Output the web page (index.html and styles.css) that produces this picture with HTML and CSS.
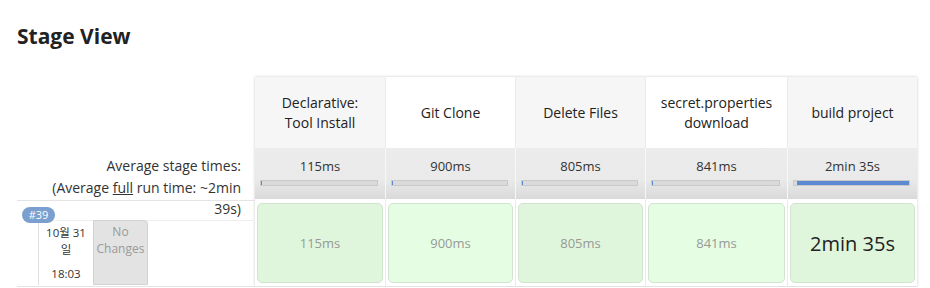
FILE: index.html
```html
<!DOCTYPE html>
<html lang="ko">
<head>
    <meta charset="UTF-8">
    <title>Stage View</title>
    <link rel="stylesheet" href="styles.css">
</head>
<body>
    <h1 class="title">Stage View</h1>

    <div class="stage-view">
        <div class="labels">
            <div class="labels-head"></div>
            <div class="avg-label">
                Average stage times:<br>
                (Average <u>full</u> run time: ~2min<br>
                39s)
            </div>
            <div class="build-label">
                <span class="badge">#39</span>
                <div class="build-info">
                    <div class="build-date">10월 31<br>일<span class="build-time">18:03</span></div>
                    <div class="changes">No<br>Changes</div>
                </div>
            </div>
        </div>

        <div class="stages">
            <div class="row head">
                <div class="col c1 odd">Declarative:<br>Tool Install</div>
                <div class="col c2">Git Clone</div>
                <div class="col c3 odd">Delete Files</div>
                <div class="col c4">secret.properties<br>download</div>
                <div class="col c5 odd">build project</div>
            </div>
            <div class="row avg">
                <div class="col c1">115ms<div class="bar"><div class="fill" style="margin-left:0;width:1px"></div></div></div>
                <div class="col c2">900ms<div class="bar"><div class="fill" style="margin-left:0;width:1px"></div></div></div>
                <div class="col c3">805ms<div class="bar"><div class="fill" style="margin-left:0;width:1px"></div></div></div>
                <div class="col c4">841ms<div class="bar"><div class="fill" style="margin-left:0;width:1px"></div></div></div>
                <div class="col c5">2min 35s<div class="bar"><div class="fill" style="margin-left:3px;width:112px"></div></div></div>
            </div>
            <div class="row build">
                <div class="col c1"><div class="cell odd">115ms</div></div>
                <div class="col c2"><div class="cell">900ms</div></div>
                <div class="col c3"><div class="cell odd">805ms</div></div>
                <div class="col c4"><div class="cell">841ms</div></div>
                <div class="col c5"><div class="cell odd long">2min 35s</div></div>
            </div>
        </div>
    </div>
</body>
</html>
```

FILE: styles.css
```css
body {
    margin: 0;
    font-family: "Open Sans", "Noto Sans CJK KR", sans-serif;
    color: #333;
}

.title {
    margin: 0;
    padding: 24px 0 0 17px;
    font-size: 21px;
    line-height: 24px;
    font-weight: bold;
    color: #222;
}

.stage-view {
    display: flex;
    margin: 29px 0 0 17px;
}

/* left column */
.labels {
    width: 238px;
}

.labels-head {
    height: 71px;
}

.avg-label {
    height: 52px;
    box-sizing: border-box;
    padding: 7px 14px 0 0;
    text-align: right;
    white-space: nowrap;
    font-size: 14px;
    line-height: 21.5px;
    color: #333;
}

.build-label {
    position: relative;
    height: 87px;
    box-sizing: border-box;
    border-top: 1px solid #e4e4e4;
    border-bottom: 1px solid #e4e4e4;
}

.badge {
    position: absolute;
    left: 5px;
    top: 6px;
    width: 33px;
    height: 16px;
    border-radius: 8px;
    background-color: #7ba0cf;
    color: #fff;
    font-size: 11px;
    line-height: 16px;
    text-align: center;
}

.build-info {
    display: flex;
    margin: 19px 0 0 21px;
    height: 64px;
    border-top: 1px solid #eee;
}

.build-date {
    width: 55px;
    box-sizing: border-box;
    border-left: 1px solid #e0e0e0;
    padding-top: 3px;
    text-align: center;
    font-size: 11.5px;
    line-height: 17px;
}

.build-time {
    display: block;
    margin-top: 7px;
}

.changes {
    width: 55px;
    box-sizing: border-box;
    margin-top: -1px;
    border: 1px solid #d2d2d2;
    border-top-right-radius: 4px;
    background-color: #e3e3e3;
    color: #9a9a9a;
    text-align: center;
    font-size: 12px;
    line-height: 17px;
    padding-top: 2px;
}

/* stage table */
.stages {
    box-shadow: 0 0 3px rgba(0, 0, 0, 0.2);
}

.row {
    display: flex;
}

.col {
    box-sizing: border-box;
    width: 130px;
}

.col.c4 {
    width: 142px;
}

.col + .col {
    border-left: 1px solid #ebebeb;
}

.head .col {
    height: 71px;
    display: flex;
    align-items: center;
    justify-content: center;
    text-align: center;
    font-size: 14px;
    line-height: 20px;
    color: #222;
    background-color: #fff;
}

.head .col.odd {
    background-color: #f6f6f6;
}

.avg .col {
    height: 51px;
    padding-top: 8px;
    text-align: center;
    font-size: 13px;
    line-height: 20px;
    background: linear-gradient(to bottom, #ececec 0, #eaeaea 62%, #d9d9d9 100%);
}

.avg .col + .col {
    border-left-color: #f7f7f7;
}

.bar {
    height: 6px;
    margin: 4px 7px 0 5px;
    box-sizing: border-box;
    border: 1px solid #c9c9c9;
    background-color: #dadada;
}

.fill {
    height: 4px;
    background-color: #5b8ad3;
}

.build .col {
    height: 88px;
    padding: 4px 2px;
    border-bottom: 1px solid #e2e2e2;
}

.cell {
    height: 80px;
    box-sizing: border-box;
    border: 1px solid #d2e3d0;
    border-radius: 5px;
    background-color: #e4fde3;
    color: #999;
    font-size: 13px;
    display: flex;
    align-items: center;
    justify-content: center;
}

.cell.odd {
    background-color: #dff6dc;
}

.cell.long {
    font-size: 20px;
    color: #222;
}
```
